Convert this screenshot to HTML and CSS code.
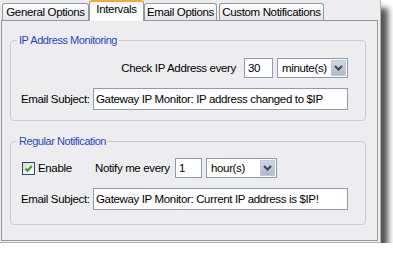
FILE: index.html
```html
<!DOCTYPE html>
<html>
<head>
  <meta charset="UTF-8">
  <title>Gateway IP Monitor - Intervals</title>
  <link rel="stylesheet" href="styles.css">
</head>
<body>
  <div class="window">
    <!-- Tab strip -->
    <div class="tabs">
      <div class="tab tab-general">General Options</div>
      <div class="tab tab-intervals selected">Intervals</div>
      <div class="tab tab-email">Email Options</div>
      <div class="tab tab-custom">Custom Notifications</div>
    </div>

    <div class="panel">
      <!-- IP address monitoring -->
      <fieldset class="group group-monitor">
        <legend>IP Address Monitoring</legend>
        <div class="row row-right">
          <span>Check IP Address every</span>
          <input type="text" class="textbox num-minutes" value="30">
          <div class="combo">
            <span class="combo-value">minute(s)</span>
            <span class="combo-arrow">
              <svg width="9" height="6" viewBox="0 0 9 6"><path d="M1 1 L4.5 4.5 L8 1" fill="none" stroke="#3a4560" stroke-width="2"/></svg>
            </span>
          </div>
        </div>
        <div class="row row-subject">
          <span class="field-label">Email Subject:</span>
          <input type="text" class="textbox subject" value="Gateway IP Monitor: IP address changed to $IP">
        </div>
      </fieldset>

      <!-- Regular notification -->
      <fieldset class="group group-regular">
        <legend>Regular Notification</legend>
        <div class="row">
          <label class="check-label">
            <span class="checkbox">
              <svg width="11" height="11" viewBox="0 0 11 11"><path d="M2.5 5.5 L4.5 7.8 L8.8 3" fill="none" stroke="#21a121" stroke-width="2"/></svg>
            </span>
            Enable
          </label>
          <span class="notify-label">Notify me every</span>
          <input type="text" class="textbox num-hours" value="1">
          <div class="combo">
            <span class="combo-value">hour(s)</span>
            <span class="combo-arrow">
              <svg width="9" height="6" viewBox="0 0 9 6"><path d="M1 1 L4.5 4.5 L8 1" fill="none" stroke="#3a4560" stroke-width="2"/></svg>
            </span>
          </div>
        </div>
        <div class="row row-subject">
          <span class="field-label">Email Subject:</span>
          <input type="text" class="textbox subject" value="Gateway IP Monitor: Current IP address is $IP!">
        </div>
      </fieldset>
    </div>
  </div>
</body>
</html>
```

FILE: styles.css
```css
body {
  margin: 0;
  background: #ffffff;
  font-family: "Liberation Sans", Arial, sans-serif;
  font-size: 11.5px;
  letter-spacing: -0.35px;
  color: #000;
}
.window {
  box-sizing: border-box;
  width: 381px;
  height: 243px;
  background: #ededf0;
  border-right: 1px solid #b2b2b6;
  border-bottom: 1px solid #b2b2b6;
  box-shadow: 7px 8px 6px rgba(0, 0, 0, 0.68);
}

/* Tabs */
.tabs {
  display: flex;
  align-items: flex-end;
  height: 20px;
  padding-left: 2px;
}
.tab {
  box-sizing: border-box;
  height: 17px;
  line-height: 16px;
  text-align: center;
  white-space: nowrap;
  border: 1px solid #919b9c;
  border-bottom: none;
  border-radius: 3px 3px 0 0;
  background: linear-gradient(#ffffff, #e4e4ea);
}
.tab.selected {
  position: relative;
  z-index: 1;
  height: 21px;
  margin-bottom: -1px;
  line-height: 15px;
  background: #fcfcfd;
  border-top: 2px solid #f2a93b;
}
.tab-general {
  width: 87px;
}
.tab-intervals {
  width: 55px;
}
.tab-email {
  width: 73px;
}
.tab-custom {
  width: 105px;
  margin-left: 2px;
}

/* Panel */
.panel {
  box-sizing: border-box;
  width: 377px;
  height: 221px;
  margin-left: 1px;
  border: 1px solid #919b9c;
  background: #ededf0;
  padding: 12px 11px 0 8px;
}
.group {
  margin: 0;
  padding: 11px 17px 10px 10px;
  border: 1px solid #cbcbd0;
  border-radius: 4px;
}
.group legend {
  padding: 0 2px;
  margin-left: -4px;
  line-height: 14px;
  font-size: 11px;
  letter-spacing: -0.45px;
  color: #1f48bc;
}
.group-regular {
  margin-top: 13px;
  padding-top: 10px;
  padding-bottom: 14px;
}
.row {
  display: flex;
  align-items: center;
  height: 20px;
}
.row-right {
  justify-content: flex-end;
}
.row-subject {
  height: 22px;
  margin-top: 10px;
}
.field-label {
  width: 72px;
  flex-shrink: 0;
}

/* Inputs */
.textbox {
  box-sizing: border-box;
  height: 20px;
  margin: 0;
  padding: 0 3px;
  border: 1px solid #8e9aaf;
  background: #fff;
  font: inherit;
  letter-spacing: -0.35px;
  color: #000;
}
.subject {
  flex: 1;
  height: 22px;
  padding-left: 2px;
}
.num-minutes {
  width: 29px;
  margin-left: 8px;
}
.num-hours {
  width: 27px;
}
.combo {
  box-sizing: border-box;
  display: flex;
  align-items: stretch;
  width: 71px;
  height: 20px;
  margin-left: 4px;
  padding: 1px;
  border: 1px solid #8e9aaf;
  background: #fff;
}
.combo-value {
  flex: 1;
  line-height: 16px;
  padding-left: 3px;
}
.combo-arrow {
  box-sizing: border-box;
  width: 15px;
  display: flex;
  align-items: center;
  justify-content: center;
  border: 1px solid #c3c8d8;
  background: linear-gradient(#d3d6e4, #b2b7cc);
}

/* Checkbox row */
.check-label {
  display: flex;
  align-items: center;
  width: 73px;
  margin-left: 1px;
}
.checkbox {
  box-sizing: border-box;
  width: 13px;
  height: 13px;
  margin-right: 3px;
  display: flex;
  align-items: center;
  justify-content: center;
  border: 1px solid #2a4e72;
  background: linear-gradient(135deg, #dcdcd6, #ffffff);
}
.notify-label {
  width: 80px;
}
```
